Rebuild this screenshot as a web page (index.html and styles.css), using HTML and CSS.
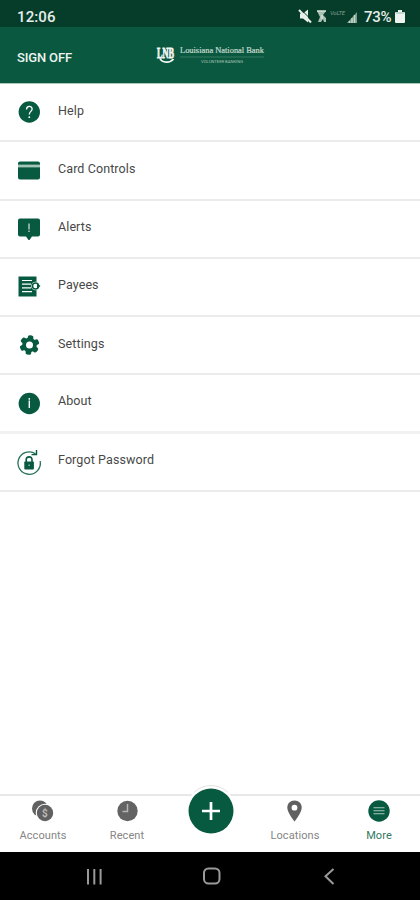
FILE: index.html
```html
<!DOCTYPE html>
<html lang="en">
<head>
<meta charset="utf-8">
<title>Louisiana National Bank</title>
<link rel="stylesheet" href="styles.css">
</head>
<body>
<div class="status">
  <span class="clock">12:06</span>
  <svg class="status-icons" width="66" height="20" viewBox="0 0 66 20">
    <path d="M2 6.500h3l5-4v13l-5-4H2z" fill="#e6efe9"/>
    <path d="M2.500 2l11 11" stroke="#063c2a" stroke-width="1"/>
    <path d="M1 3l12 12.500" stroke="#e6efe9" stroke-width="2"/>
    <path d="M19 4h9l-3 4 3 3v4h-2l-1-3-2 3h-3l2-5z" fill="#a9c0b3"/>
    <path d="M19 4h9M24 8v4" stroke="#d5e2da" stroke-width="1.500"/>
    <text x="32" y="8" font-size="6" textLength="15" fill="#7f9e8e" font-style="italic">VoLTE</text>
    <path d="M49 16l10-11v11z" fill="#7b9c8b"/>
    <path d="M51.500 16v-2M54 16v-5M56.500 16V8" stroke="#c3d4ca" stroke-width="1.500"/>
  </svg>
  <span class="percent">73%</span>
  <svg class="battery" width="10" height="14" viewBox="0 0 10 14"><path d="M3 0h4v2h2q1 0 1 1v9q0 1-1 1H1q-1 0-1-1V3q0-1 1-1h2z" fill="#edf4ef"/><path d="M1 3h8" stroke="#9bb7a8"/></svg>
</div>
<header class="header">
  <span class="signoff">SIGN OFF</span>
  <svg class="logo" width="112" height="26" viewBox="0 0 112 26">
    <text x="1" y="9.400" class="monogram" transform="scale(1 1.600)" textLength="17" lengthAdjust="spacingAndGlyphs">LNB</text>
    <path d="M4 15.500c2 4.500 10 5 13.500.5" fill="none" stroke="#f2f7f4" stroke-width="1.800"/>
    <text x="24" y="10" class="bank" textLength="84" lengthAdjust="spacingAndGlyphs">Louisiana National Bank</text>
    <path d="M24 14h84" stroke="#3f826a" stroke-width=".8"/>
    <text x="45" y="19.500" class="tagline" textLength="42" lengthAdjust="spacingAndGlyphs">VOLUNTEER BANKING</text>
  </svg>
</header>
<main class="menu">
  <div class="row"><svg class="icon" viewBox="0 0 24 24"><circle cx="12.300" cy="12" r="10.700"/><path class="cut" d="M9.500 9.500c0-4 5.600-4 5.600-.5 0 2.500-2.800 2.300-2.800 5.500" stroke-width="1.300"/><circle cx="12.300" cy="17.200" r=".9" fill="#fff"/></svg><span>Help</span></div>
  <div class="row"><svg class="icon" viewBox="0 0 24 24"><path d="M1 5.500q0-2 2-2h18q2 0 2 2v1.300H1zM1 9.200h22V19.500q0 2-2 2H3q-2 0-2-2z"/><path d="M1 8h22" stroke="#a3c7b6" stroke-width="2"/></svg><span>Card Controls</span></div>
  <div class="row"><svg class="icon" viewBox="0 0 24 24"><path d="M3 1.500h18q2 0 2 2v14q0 2-2 2h-6L12.500 23h-1L9 19.500H3q-2 0-2-2v-14q0-2 2-2z"/><path class="cut" d="M12 6.500v6M12 13.500v1.500" stroke-width="1"/></svg><span>Alerts</span></div>
  <div class="row"><svg class="icon" viewBox="0 0 24 24"><path d="M1.500 1.500h18v20h-18z"/><path class="cut" d="M5 5.500h10M5 9.200h9M5 12.900h9M5 16.700h10" stroke-width="1.200"/><circle cx="18.500" cy="11" r="4.300" fill="#fff"/><circle cx="18.500" cy="11" r="3" fill="none" stroke="#075a40" stroke-width="1.500"/><path d="M20 8l3.500 3-3.500 3z"/></svg><span>Payees</span></div>
  <div class="row"><svg class="icon" viewBox="0 0 24 24"><g transform="rotate(8 12.500 12)"><rect x="9.700" y="2.200" width="5.600" height="19.600" rx="1.800"/><rect x="9.700" y="2.200" width="5.600" height="19.600" rx="1.800" transform="rotate(60 12.500 12)"/><rect x="9.700" y="2.200" width="5.600" height="19.600" rx="1.800" transform="rotate(120 12.500 12)"/><circle cx="12.500" cy="12" r="7.300"/></g><circle cx="12.500" cy="12" r="3.500" fill="#fff"/></svg><span>Settings</span></div>
  <div class="row"><svg class="icon" viewBox="0 0 24 24"><circle cx="12.300" cy="12.500" r="10.700"/><path class="cut" d="M12.300 7v1.700M12.300 9.500v7.500" stroke-width="1.400"/></svg><span>About</span></div>
  <div class="row"><svg class="icon" viewBox="0 0 24 24"><path d="M18.600 3.900A11.200 11.200 0 1 0 23.200 11" fill="none" stroke="#287359" stroke-width="1.300"/><path d="M14.500 4.600h5V0" fill="none" stroke="#075a40" stroke-width="1.400"/><rect x="7.300" y="11.500" width="9.600" height="8" rx=".8"/><path d="M9.200 12V9.800q0-2.900 2.900-2.900t2.900 2.900V12" fill="none" stroke="#075a40" stroke-width="1.600"/><path class="cut" d="M12.100 14.500v1.500" stroke-width=".8"/></svg><span>Forgot Password</span></div>
</main>
<nav class="tabs">
  <div class="tab"><svg width="26" height="24" viewBox="0 0 26 24"><circle cx="10" cy="9.500" r="8" fill="#606060"/><circle cx="15" cy="14" r="9.300" fill="#fff"/><circle cx="15" cy="14" r="8.200" fill="#606060"/><text x="15" y="17.500" font-size="10" font-weight="bold" text-anchor="middle" fill="#bbb">$</text></svg><span>Accounts</span></div>
  <div class="tab"><svg width="24" height="24" viewBox="0 0 24 24"><circle cx="12.500" cy="12" r="10.200" fill="#636363"/><path d="M12.500 5v7.500H7.500" fill="none" stroke="#b5b5b5" stroke-width="1.500"/></svg><span>Recent</span></div>
  <div class="tab"><svg class="add" width="50" height="50" viewBox="0 0 50 50"><circle cx="25" cy="25" r="24.500" fill="#fff"/><path d="M8.200 7.200A24.500 24.500 0 0 1 41.800 7.200" fill="none" stroke="#e1e4e2"/><circle cx="25" cy="26" r="22.500" fill="#075a40"/><path d="M16 26h18M25 17v18" stroke="#fff" stroke-width="2.700"/></svg></div>
  <div class="tab"><svg width="24" height="24" viewBox="0 0 24 24"><path d="M11.500 1.500c-4.200 0-7.200 3-7.200 7.200 0 5 7.200 13.800 7.200 13.800s7.200-8.800 7.200-13.800c0-4.200-3-7.200-7.200-7.200z" fill="#606060"/><circle cx="11.500" cy="8.700" r="2.900" fill="#fff"/></svg><span>Locations</span></div>
  <div class="tab active"><svg width="24" height="24" viewBox="0 0 24 24"><circle cx="12" cy="12" r="10.700" fill="#075a40"/><path d="M6.500 8.800h11M6.500 11.800h11M6.500 14.800h11" stroke="#a8c9ba" stroke-width="1.100"/></svg><span>More</span></div>
</nav>
<footer class="system">
  <svg width="420" height="48" viewBox="0 0 420 48" fill="none" stroke="#9a9a9a" stroke-width="2">
    <path d="M88 17v15.500M94.300 17v15.500M100.600 17v15.500"/>
    <rect x="204" y="16.500" width="15.500" height="15" rx="4.500"/>
    <path d="M333.500 17l-8 7.300 8 7.700"/>
  </svg>
</footer>
</body>
</html>
```
FILE: styles.css
```css
* { box-sizing: border-box; }
body {
  margin: 0;
  width: 420px;
  height: 900px;
  overflow: hidden;
  display: flex;
  flex-direction: column;
  background: #fff;
  font-family: Roboto, "Liberation Sans", sans-serif;
}
svg { display: block; flex: none; overflow: visible; }
.status {
  height: 27px;
  flex: none;
  display: flex;
  align-items: center;
  padding: 6px 15px 0 17px;
  background: #063c2a;
  color: #e6eee9;
}
.clock { font-size: 15px; letter-spacing: .1px; font-weight: 500; }
.status-icons { margin-left: auto; }
.percent { font-size: 15px; line-height: 20px; width: 30px; letter-spacing: -.3px; font-weight: 500; }
.battery { margin-left: 1px; }
.header {
  height: 57px;
  flex: none;
  display: flex;
  align-items: center;
  padding-left: 17px;
  padding-top: 4px;
  background: #0a583f;
  border-bottom: 1px solid #aac8b9;
}
.signoff { width: 139px; color: #edf4f0; font-size: 13px; font-weight: 500; letter-spacing: -.15px; }
.logo { margin-bottom: 3px; }
.monogram {
  font-family: "Liberation Serif", serif;
  font-size: 9px;
  font-weight: bold;
  fill: #f2f7f4;
  stroke: #f2f7f4;
  stroke-width: .5px;
}
.bank { font-family: "Liberation Serif", serif; font-size: 8px; fill: #c5dacf; stroke: #c5dacf; stroke-width: .2px; }
.tagline { font-size: 3px; fill: #a5c4b6; }
.menu { flex: none; }
.row {
  height: 58.25px;
  display: flex;
  align-items: center;
  padding-left: 17px;
  border-bottom: 2px solid #ebebeb;
  color: #484848;
  font-size: 12.5px;
  letter-spacing: .1px;
}
.row:nth-child(6) { border-bottom: 3px solid #f1f1f1; }
.icon { width: 24px; height: 24px; margin-right: 17px; fill: #075a40; }
.row span { padding-bottom: 4px; }
.cut { fill: none; stroke: #fff; }
.tabs {
  margin-top: auto;
  height: 58px;
  flex: none;
  display: grid;
  grid-template-columns: repeat(5, 84px);
  padding-left: 1px;
  border-top: 2px solid #e8e8e8;
}
.tab {
  display: flex;
  flex-direction: column;
  align-items: center;
  padding-top: 3px;
  color: #858585;
  font-size: 11px;
  line-height: 13px;
  letter-spacing: .1px;
}
.tab span { margin-top: 6px; }
.active { color: #327961; }
.add { margin-top: -14px; }
.system { height: 48px; flex: none; background: #000; }
```
